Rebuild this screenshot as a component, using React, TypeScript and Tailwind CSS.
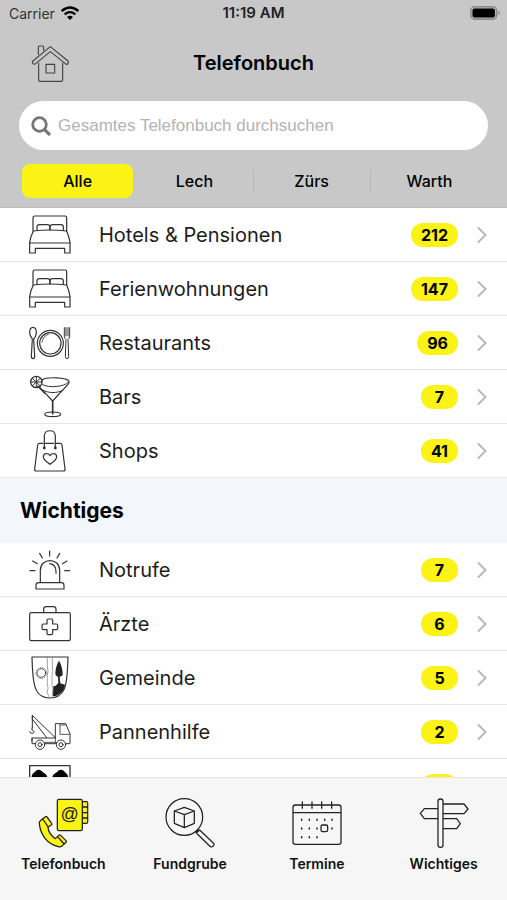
import type { ReactNode } from "react";

type Entry = { label?: string; count?: number; icon: ReactNode };

function RowIcon({ box, children }: { box: string; children: ReactNode }) {
  return (
    <svg
      aria-hidden="true"
      viewBox={box}
      className="h-[54px] w-11 shrink-0"
      fill="none"
      stroke="#333"
      strokeWidth="3.6"
      strokeLinecap="round"
      strokeLinejoin="round"
    >
      {children}
    </svg>
  );
}

function TabIcon({ box, children }: { box: string; children: ReactNode }) {
  return (
    <svg
      aria-hidden="true"
      viewBox={box}
      className="size-[52px]"
      fill="none"
      stroke="#222"
      strokeWidth="3.8"
      strokeLinecap="round"
      strokeLinejoin="round"
    >
      {children}
    </svg>
  );
}

const bed = (
  <RowIcon box="84 7 132 162">
    <path d="M99 76V36q0-5 5-5h91q5 0 5 5v40" />
    <path d="M111 74V64q0-7 7-7h25q6 0 7 7q1-7 7-7h26q7 0 7 7v10" />
    <path d="M150 64v9" strokeWidth="5" />
    <path d="M100 76q50-6 100 0q8 18 10 35v31h-16v-14h-88v14H89v-31q2-17 11-35z" />
    <path d="M89 112h121" />
  </RowIcon>
);

const plate = (
  <RowIcon box="84 331 132 162">
    <circle cx="151" cy="413" r="39" />
    <circle cx="151" cy="413" r="32" />
    <path d="M126 409q3-18 19-23" strokeWidth="2.5" />
    <path d="M99 365c-7 0-10 9-10 17s5 14 8 18l-3 52q0 7 5 7t5-7l-3-52c4-4 8-10 8-18s-3-17-10-17z" />
    <path d="M193 366v26q0 6 5 9l-2 51q0 7 5 7t5-7l-2-51q5-3 5-9v-26M198 366v25M204 366v25" strokeWidth="3" />
  </RowIcon>
);

const cocktail = (
  <RowIcon box="84 14 132 162">
    <ellipse cx="158" cy="147" rx="24" ry="7" />
    <path d="M158 107v38" strokeWidth="5" />
    <path d="M126 44c12-10 76-9 81 4q2 4-3 9l-46 50-38-40" />
    <path d="M128 58c18 10 64 8 78-8M130 75c14 9 44 9 58 0" strokeWidth="3" />
    <circle cx="109" cy="50" r="17" strokeWidth="4" />
    <path d="M109 34v32M93 50h33M97 39l24 23M97 61l24-22" strokeWidth="3" />
    <path d="M113 62l22 23" />
  </RowIcon>
);

const bag = (
  <RowIcon box="84 176 132 162">
    <path d="M129 234h-10q-5 0-6 5l-9 72q-1 6 5 6h81q6 0 5-6l-9-72q-1-5-6-5h-11M136 234h26" />
    <path d="M133 248v-36c0-21 33-21 33 0v36" />
    <circle cx="133" cy="248" r="2.5" fill="#333" />
    <circle cx="166" cy="248" r="2.5" fill="#333" />
    <path d="M150 297c-7-6-20-13-20-23 0-11 14-13 20-3 6-10 20-8 20 3 0 10-13 17-20 23z" />
  </RowIcon>
);

const siren = (
  <RowIcon box="84 8 132 162">
    <path d="M121 126V90c0-39 58-39 58 0v36" />
    <path d="M149 70q19 2 19 24v5" />
    <path d="M108 146v-11q0-8 8-8h68q8 0 8 8v11z" />
    <path d="M149 32v15M119 39l8 14M179 39l-8 14M98 62l14 8M201 62l-14 8M90 91h15M194 91h15" />
  </RowIcon>
);

const firstAid = (
  <RowIcon box="84 170 132 162">
    <rect x="89" y="217" width="122" height="84" rx="5" />
    <path d="M131 216v-9q0-8 8-8h21q8 0 8 8v9" />
    <path d="M141 240q0-4 4-4h9q4 0 4 4v11h11q4 0 4 4v9q0 4-4 4h-11v11q0 4-4 4h-9q-4 0-4-4v-11h-11q-4 0-4-4v-9q0-4 4-4h11z" />
  </RowIcon>
);

const crest = (
  <RowIcon box="84 18 132 162">
    <path d="M96 36h108c-1 26-1 55-7 82-5 25-22 41-47 41s-42-16-47-41c-6-27-6-56-7-82z" />
    <path d="M142 38v28q4 12 0 25v26q5 12-1 25l7 15M157 38v28q3 12-1 25v30l3 8-3 28" stroke="#777" strokeWidth="2" />
    <circle cx="124" cy="84" r="13" strokeWidth="2.5" />
    <circle cx="124" cy="84" r="16" strokeWidth="2.5" strokeDasharray="1 6" />
    <path d="M177 47c-7 10-11 28-11 38q0 9 8 10l1 19-8 8-7 2-1 30 9-1c17-8 25-17 27-34l-14-4-2-20q10 0 9-10c0-12-5-28-11-38z" fill="#222" stroke="none" />
  </RowIcon>
);

const towTruck = (
  <RowIcon box="84 180 132 162">
    <g strokeWidth="3">
      <path d="M97 249v-38l69 67M97 222l43 56M97 211v11" />
      <path d="M96 249v7c8 1 8 9 0 9q-6 0-7-5" />
      <path d="M106 296H96v-17h70v-43h31l13 31v29h-13M133 296h37M96 279v9" />
      <path d="M180 240v28h28M180 240h16M166 279v13M134 292h35" strokeWidth="2.5" />
      <circle cx="120" cy="299" r="14" />
      <circle cx="120" cy="299" r="6" />
      <circle cx="183" cy="299" r="14" />
      <circle cx="183" cy="299" r="6" />
    </g>
  </RowIcon>
);

const mountains = (
  <RowIcon box="84 342 132 162">
    <rect x="89" y="362" width="121" height="118" strokeWidth="4" />
    <path d="M95 397c0-12 8-14 13-20q8-6 16 0c6 7 16 8 18 20v30H95zM157 397c2-12 12-13 18-20q8-6 16 0c5 7 13 8 13 20v30h-47z" fill="#000" stroke="none" />
  </RowIcon>
);

const categories: Entry[] = [
  { label: "Hotels & Pensionen", count: 212, icon: bed },
  { label: "Ferienwohnungen", count: 147, icon: bed },
  { label: "Restaurants", count: 96, icon: plate },
  { label: "Bars", count: 7, icon: cocktail },
  { label: "Shops", count: 41, icon: bag },
];

const important: Entry[] = [
  { label: "Notrufe", count: 7, icon: siren },
  { label: "Ärzte", count: 6, icon: firstAid },
  { label: "Gemeinde", count: 5, icon: crest },
  { label: "Pannenhilfe", count: 2, icon: towTruck },
  { icon: mountains },
];

const tabs = [
  {
    label: "Telefonbuch",
    icon: (
      <TabIcon box="114 81 156 156">
        <path d="M250 95h12q4 0 4 4v57q0 4-4 4h-12M250 111h16M250 128h16M250 144h16" fill="#fbf216" />
        <rect x="175" y="88" width="75" height="94" rx="5" fill="#fbf216" />
        <text x="212" y="149" textAnchor="middle" fontSize="54" fontWeight="400" fontFamily="Liberation Sans, sans-serif" fill="#222" stroke="none">@</text>
        <path d="M124 152l15-12q3-2 5 1l14 19q2 3-1 5l-10 7q2 20 22 34l10-10q3-3 6 0l15 15q4 3 1 6l-13 12q-4 3-10 1c-35-9-54-37-57-69q-1-6 3-9z" fill="#fbf216" />
        <path d="M131 147l16 23M176 200l19 22" />
      </TabIcon>
    ),
  },
  {
    label: "Fundgrube",
    icon: (
      <TabIcon box="493 81 156 156">
        <circle cx="554" cy="141" r="55" />
        <path d="M554 112l30 11v37l-30 13-30-13v-37zM524 123l30 11 30-11M554 134v39" />
        <path d="M600 180l40 38q6 5 1 10-6 5-11 0l-40-39zM595 178l-6 8" />
      </TabIcon>
    ),
  },
  {
    label: "Termine",
    icon: (
      <TabIcon box="116 81 156 156">
        <rect x="122" y="105" width="144" height="118" rx="7" />
        <path d="M123 128h142M150 96v19M179 96v19M208 96v19M238 96v19" />
        <path d="M148 148v3M171 148v3M194 148v3M217 148v3M239 148v3M148 174v3M171 174v3M194 174v3M239 174v3M148 200v3M171 200v3M194 200v3" strokeWidth="4.5" />
        <rect x="206" y="165" width="20" height="20" rx="5" />
      </TabIcon>
    ),
  },
  {
    label: "Wichtiges",
    icon: (
      <TabIcon box="493 81 156 156">
        <rect x="553" y="87" width="15" height="145" rx="7" />
        <path d="M569 102h62l12 15-12 14h-62M552 116h-40l-12 14 12 16h40M569 146h40l11 15-11 15h-40" />
      </TabIcon>
    ),
  },
];

function EntryList({ entries }: { entries: Entry[] }) {
  return (
    <ul>
      {entries.map((entry, i) => (
        <li key={i} className="shadow-[inset_0_-1px_0_#e6e7e9]">
          <a href="#eintrag" className="flex h-[54px] items-center pr-[19px] pl-7">
            {entry.icon}
            <span className="ml-[27px] flex-1 text-[20px] leading-7 text-[#1c1c1c]">{entry.label}</span>
            <span className="flex h-6 min-w-[37px] items-center justify-center rounded-full bg-[#fbf216] px-[10px] text-[16px] font-bold text-black">
              {entry.count}
            </span>
            <svg
              aria-hidden="true"
              viewBox="0 0 12 18"
              className="ml-[18px] h-[18px] w-3"
              fill="none"
              stroke="#b8b8b8"
              strokeWidth="2"
            >
              <path d="M2 1.5 9.5 9 2 16.5" />
            </svg>
          </a>
        </li>
      ))}
    </ul>
  );
}

export default function App() {
  return (
    <div className="flex h-screen flex-col overflow-hidden bg-white font-['Inter',sans-serif] text-black">
      <header className="shrink-0 border-b border-[#bdbdbd] bg-[#c8c8c8] px-[19px] pb-[9px]">
        <div className="-mx-[10px] grid h-[26px] grid-cols-3 items-center text-[14px]">
          <div className="flex items-center gap-[6px] text-[#333]">
            <span>Carrier</span>
            <svg aria-hidden="true" viewBox="0 0 54 42" className="h-[14px] w-[18px]" fill="none" stroke="#000" strokeWidth="7">
              <path d="M2 15q25-21 50 0M11 25q16-13 32 0" />
              <path d="M18 33q9-7 18 0l-9 9z" fill="#000" stroke="none" />
            </svg>
          </div>
          <div className="text-center text-[15px] font-semibold text-[#222]">11:19 AM</div>
          <svg aria-hidden="true" viewBox="0 0 30 14" className="mr-[-2px] h-[14px] w-[30px] justify-self-end">
            <rect x="0.7" y="0.7" width="26" height="12.6" rx="4" fill="#b5b5b5" stroke="#8a8a8a" strokeWidth="1.4" />
            <rect x="2.5" y="2.5" width="22.4" height="9" rx="2" fill="#000" />
            <path d="M28.3 4.8q3 2.2 0 4.4z" fill="#8a8a8a" />
          </svg>
        </div>

        <div className="grid h-[75px] grid-cols-[60px_1fr_60px] items-center pb-px">
          <button type="button" aria-label="Startseite" className="justify-self-end pr-[9px]">
            <svg
              aria-hidden="true"
              viewBox="95 130 117 117"
              className="size-[39px]"
              fill="none"
              stroke="#444"
              strokeWidth="3.4"
              strokeLinejoin="round"
            >
              <path d="M117 163v-24q0-3 3-3h10q3 0 3 3v12" />
              <path d="M101 181l52-43 53 43q3 4 0 8-4 4-8 0l-45-36-44 36q-4 4-8 0-4-4 0-8z" />
              <path d="M118 186v52q0 4 4 4h64q4 0 4-4v-52" />
              <rect x="140" y="191" width="26" height="26" />
            </svg>
          </button>
          <h1 className="text-center text-[20px] font-semibold">Telefonbuch</h1>
        </div>

        <label className="flex h-[49px] items-center rounded-full bg-white pr-5 pl-3">
          <svg aria-hidden="true" viewBox="0 0 20 20" className="size-5 shrink-0" fill="none" stroke="#777" strokeWidth="2.8">
            <circle cx="8.5" cy="8.5" r="6.8" />
            <path d="M13.3 13.3 19 19" strokeWidth="3.2" />
          </svg>
          <input
            type="search"
            aria-label="Gesamtes Telefonbuch durchsuchen"
            placeholder="Gesamtes Telefonbuch durchsuchen"
            className="ml-[7px] min-w-0 flex-1 bg-transparent font-['Liberation_Sans',Arial,sans-serif] text-[17px] outline-none placeholder:text-[#b3b3b3]"
          />
        </label>

        <div className="mt-[14px] grid h-[34px] grid-cols-4 items-center text-[16px] leading-[22px] font-medium">
          <div className="px-[3px]">
            <button type="button" aria-pressed="true" className="h-[34px] w-full rounded-lg bg-[#fbf216]">
              Alle
            </button>
          </div>
          <button type="button" className="h-[22px] border-r border-[#b6b6b6]">Lech</button>
          <button type="button" className="h-[22px] border-r border-[#b6b6b6]">Zürs</button>
          <button type="button" className="h-[22px]">Warth</button>
        </div>
      </header>

      <main className="min-h-0 flex-1 overflow-hidden">
        <EntryList entries={categories} />
        <h2 className="flex h-[65px] items-center bg-[#f3f6fa] px-5 text-[21px] font-bold">Wichtiges</h2>
        <EntryList entries={important} />
      </main>

      <nav className="grid shrink-0 grid-cols-4 border-t border-[#e4e4e4] bg-[#f6f6f6] pt-[19px] pb-[26px]">
        {tabs.map((tab) => (
          <a key={tab.label} href="#bereich" className="flex flex-col items-center gap-[5px] text-[14px] leading-5 font-semibold text-[#111]">
            {tab.icon}
            {tab.label}
          </a>
        ))}
      </nav>
    </div>
  );
}
